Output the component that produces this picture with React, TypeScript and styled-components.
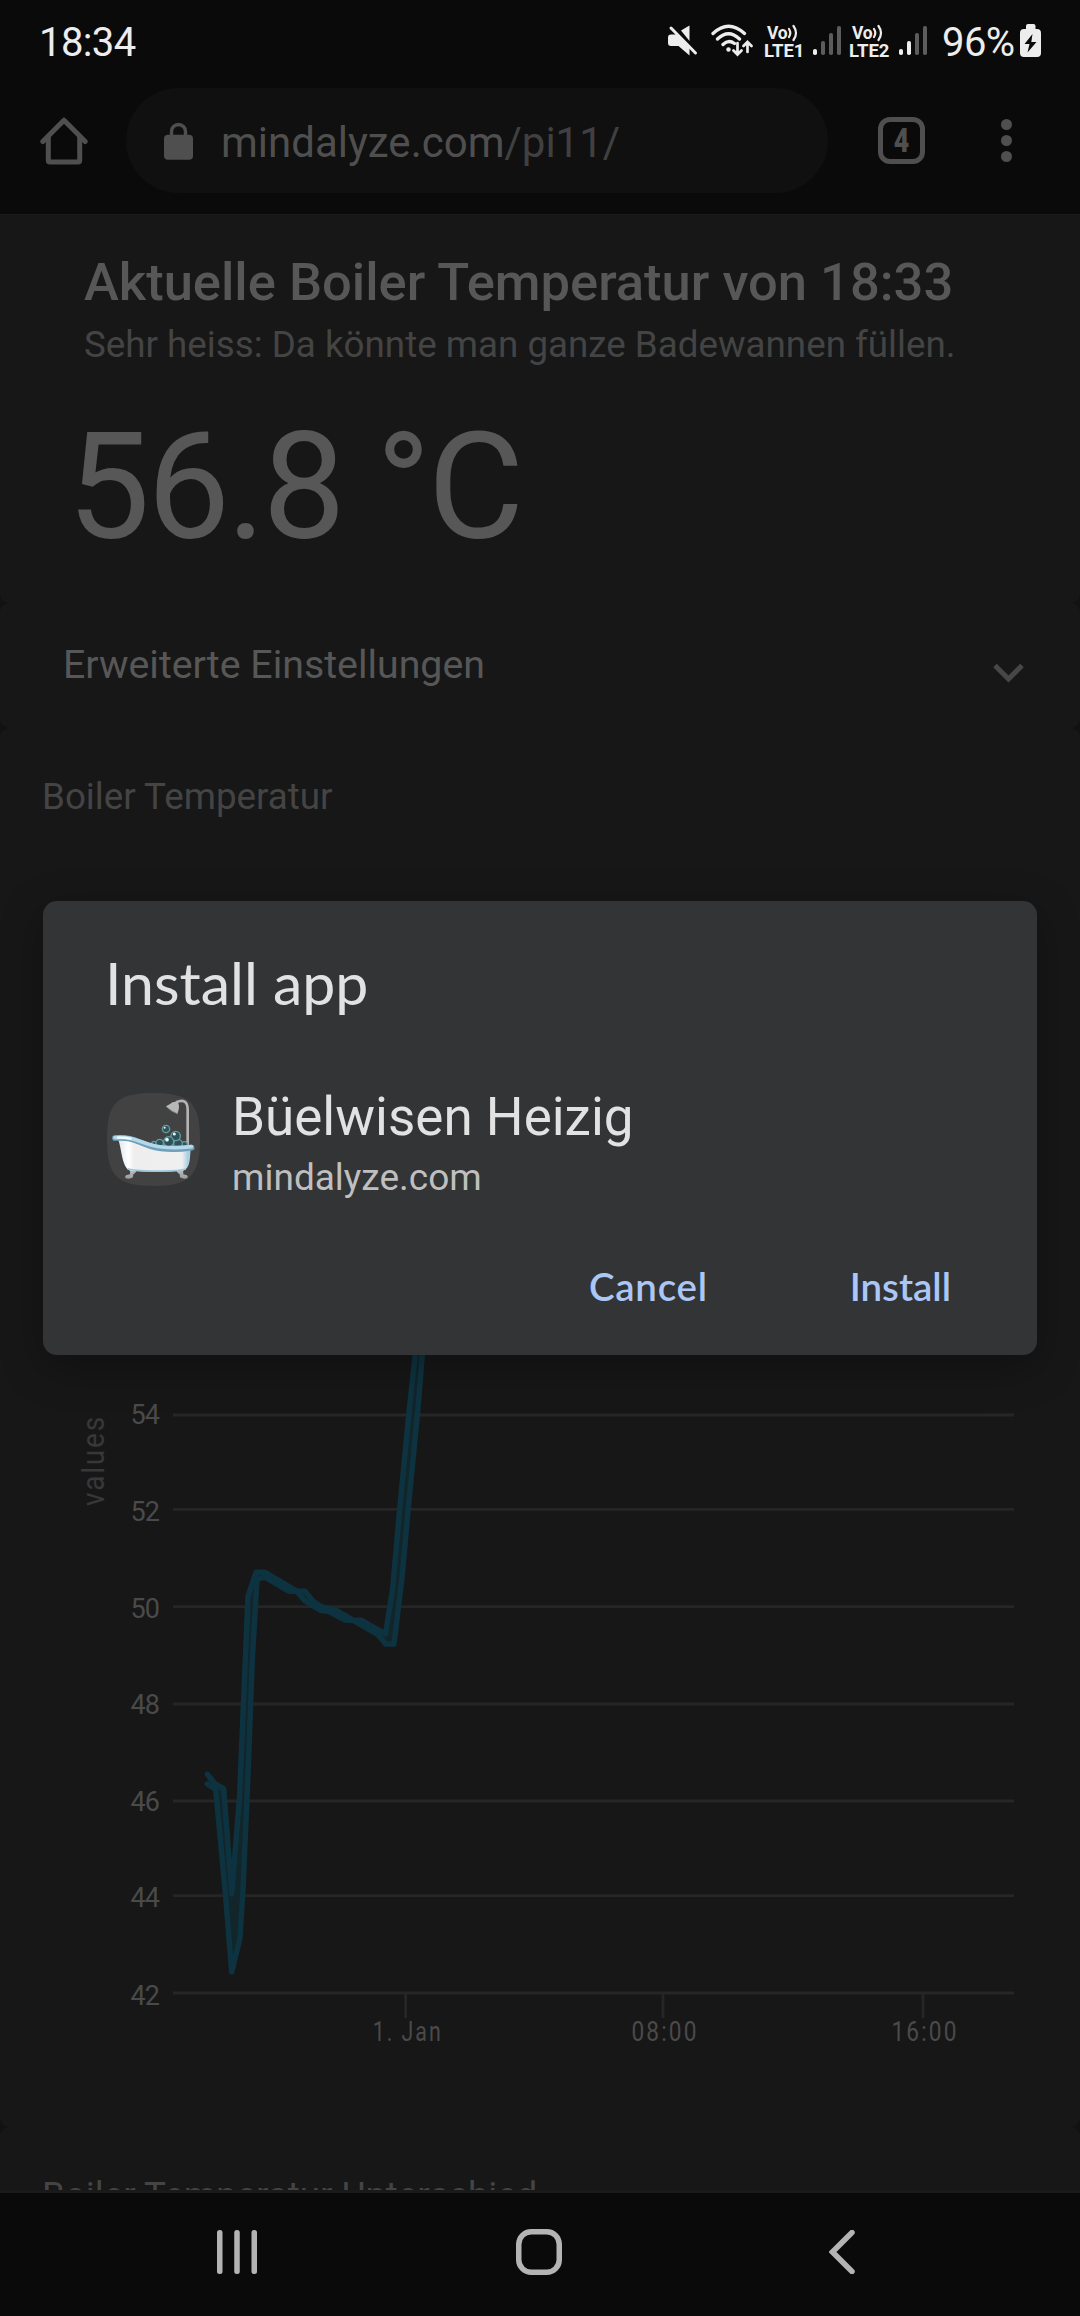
import React from 'react';
import styled, { createGlobalStyle } from 'styled-components';

const GlobalStyle = createGlobalStyle`
  * { box-sizing: border-box; }
  body { margin: 0; background: #0a0a0a; font-family: Roboto, "Noto Sans", sans-serif; }
  svg { display: block; flex: none; }
`;

const Screen = styled.div`
  position: relative;
  display: flex;
  flex-direction: column;
  width: 1080px;
  height: 2316px;
  overflow: hidden;
  background: #0a0a0a;
`;

const StatusBar = styled.header`
  display: flex;
  justify-content: space-between;
  height: 67px;
  padding: 17px 39px 0 39px;
  color: #ededed;
  font-size: 40px;
  line-height: 51px;
`;

const Clock = styled.span`
  letter-spacing: -0.6px;
`;

const StatusIcons = styled.div`
  display: flex;
  align-items: flex-start;
`;

const Slot = styled.div<{ $w: number; $gap?: number }>`
  width: ${p => p.$w}px;
  margin-left: ${p => p.$gap ?? 0}px;
  white-space: nowrap;
  letter-spacing: -0.6px;
`;

const CarrierTag = styled.div`
  display: flex;
  flex-direction: column;
  padding-top: 7px;
  font-weight: 700;
  font-size: 18.5px;
  line-height: 18px;
  letter-spacing: 0;
`;

const CarrierTop = styled.span`
  display: flex;
  padding-left: 3px;
  font-size: 17.5px;
  letter-spacing: -0.3px;
`;

const Toolbar = styled.nav`
  display: flex;
  align-items: center;
  height: 147px;
  padding-left: 39.5px;
  color: #4f4f4f;
`;

const Omnibox = styled.div`
  display: flex;
  align-items: center;
  width: 702px;
  height: 105px;
  margin-left: 38.5px;
  padding-left: 38px;
  border-radius: 53px;
  background: #101010;
  font-size: 42px;
`;

const Url = styled.span`
  margin: 4px 0 0 28px;
  line-height: 50px;
  color: #4f4f4f;
`;

const UrlPath = styled.span`
  color: #404040;
`;

const TabCount = styled.div`
  display: flex;
  align-items: center;
  justify-content: center;
  width: 47px;
  height: 47px;
  margin-left: 50px;
  border: 5px solid #4f4f4f;
  border-radius: 12px;
  font-size: 32.5px;
  font-weight: 900;
  line-height: 34px;
`;

const TabDigit = styled.span`
  transform: scaleX(0.82);
`;

const MenuDots = styled.div`
  display: flex;
  flex-direction: column;
  gap: 5px;
  margin-left: 76px;
`;

const Dot = styled.i`
  width: 11px;
  height: 11px;
  border-radius: 50%;
  background: #4f4f4f;
`;

const Page = styled.main`
  display: flex;
  flex-direction: column;
  height: 1979px;
  overflow: hidden;
  background: #121212;
  border-top: 1px solid #1a1a1a;
  border-bottom: 3px solid #1a1a1a;
`;

const Card = styled.section<{ $h: number }>`
  flex: none;
  height: ${p => p.$h}px;
  border-radius: 9px;
  background: #171717;
  overflow: hidden;
`;

const SummaryCard = styled(Card)`
  padding: 37px 0 0 84px;
  border-radius: 0 0 9px 9px;
`;

const Title = styled.h1`
  margin: 0;
  font-size: 52.5px;
  font-weight: 500;
  line-height: 60px;
  color: #575757;
  white-space: nowrap;
`;

const Subtitle = styled.p`
  margin: 11px 0 0;
  font-size: 36.75px;
  line-height: 44px;
  color: #444444;
  white-space: nowrap;
`;

const Reading = styled.div`
  margin: 45px 0 0 -17px;
  font-size: 148px;
  line-height: 152px;
  letter-spacing: -3.3px;
  color: #575757;
  white-space: nowrap;
`;

const SettingsCard = styled(Card)`
  display: flex;
  align-items: center;
  justify-content: space-between;
  padding: 0 56px 2px 63px;
  font-size: 39.3px;
  line-height: 50px;
  color: #575757;
`;

const ChartCard = styled(Card)`
  padding-top: 47px;
`;

const CardTitle = styled.h2`
  margin: 0;
  padding-left: 42px;
  font-size: 36.75px;
  font-weight: 400;
  line-height: 44px;
  color: #444444;
`;

const Dialog = styled.div`
  position: absolute;
  top: 901px;
  left: 43px;
  display: flex;
  flex-direction: column;
  width: 994px;
  height: 454px;
  padding: 47px 86px 0 64px;
  border-radius: 14px;
  background: #333436;
  box-shadow: 0 12px 44px rgba(0, 0, 0, 0.3);
`;

const DialogTitle = styled.h2`
  margin: 0 0 0 -2px;
  font-family: Lato, Roboto, sans-serif;
  font-size: 59px;
  font-weight: 400;
  line-height: 70px;
  color: #e2e2e2;
`;

const AppRow = styled.div`
  display: flex;
  margin-top: 67px;
`;

const AppIcon = styled.div`
  margin-top: 8px;
`;

const AppText = styled.div`
  display: flex;
  flex-direction: column;
  margin-left: 32px;
`;

const AppName = styled.span`
  margin-top: -1px;
  font-size: 53px;
  line-height: 66px;
  color: #e2e2e2;
`;

const AppHost = styled.span`
  font-size: 37px;
  line-height: 44px;
  margin-top: 6px;
  color: #bfbfbf;
`;

const Actions = styled.div`
  display: flex;
  justify-content: flex-end;
  gap: 142px;
  margin-top: 56px;
`;

const Action = styled.button<{ $tracking?: number }>`
  padding: 0;
  border: 0;
  background: none;
  color: #aac7f6;
  font-family: Lato, Roboto, sans-serif;
  font-size: 38.5px;
  font-weight: 600;
  line-height: 60px;
  letter-spacing: ${p => p.$tracking ?? 0}px;
`;

const NavBar = styled.footer`
  display: grid;
  grid-template-columns: repeat(3, 1fr);
  justify-items: center;
  align-items: center;
  height: 123px;
  padding: 0 87px 6px 86px;
`;

const Bars = ({ level }: { level: number }) => (
  <svg width="28" height="38" viewBox="0 0 28 38">
    {[6, 14, 22, 29].map((h, i) => (
      <rect key={h} x={i * 8} y={38 - h} width="4" height={h} rx="1.8" fill={i < level ? '#ededed' : '#5c5c5c'} />
    ))}
  </svg>
);

const Carrier = ({ n }: { n: number }) => (
  <CarrierTag>
    <CarrierTop>
      Vo
      <svg width="11" height="18" viewBox="0 0 11 18" fill="none" stroke="#ededed" strokeWidth="2.2" strokeLinecap="round">
        <path d="M2 5q2.600 4 0 8M6.500 2q5 7 0 14" />
      </svg>
    </CarrierTop>
    <span>LTE{n}</span>
  </CarrierTag>
);

const Muted = () => (
  <svg width="30" height="42" viewBox="0 0 30 42" fill="#ededed">
    <path d="M10.500 17.500H3q-3 0-3 3v5.500q0 3 3 3h7.500L21.500 38.500V29L9.500 17.500z" />
    <path d="M13 13.500L21.500 8.500V24z" />
    <path d="M3 11L27.500 36" stroke="#ededed" strokeWidth="3" strokeLinecap="round" />
  </svg>
);

const Wifi = () => (
  <svg width="42" height="42" viewBox="0 0 42 42" fill="none" stroke="#ededed" strokeWidth="3.300" strokeLinecap="round">
    <path d="M2 16.500Q17.500 2 33.500 16.500M6.500 22Q17.500 11.500 28.500 22M12 27.500Q17.500 22 23.500 26.500" />
    <circle cx="17.500" cy="32.500" r="2.200" fill="#ededed" stroke="none" />
    <path d="M26.500 26V37M22.500 33.500L26.500 37.500L30.500 33.500M36.500 35V26M32.500 29L36.500 25L40.500 29" strokeWidth="2.700" />
  </svg>
);

const Battery = () => (
  <svg width="21" height="42" viewBox="0 0 21 42">
    <path d="M6 9q0-2 2-2h5.500q2 0 2 2v3H17q4 0 4 4v20q0 4-4 4H4q-4 0-4-4V16q0-4 4-4h2z" fill="#ededed" />
    <path d="M12.500 17L4.500 27h5L7.500 35.500L16.500 25h-5.200z" fill="#0a0a0a" />
  </svg>
);

const Home = () => (
  <svg width="48" height="48" viewBox="0 0 48 48" fill="none" stroke="#4f4f4f" strokeWidth="5" strokeLinecap="round" strokeLinejoin="round">
    <path d="M2.800 24.500L24 3.200L45.200 24.500" />
    <path d="M8.300 20V43.200q0 1.800 1.800 1.800H37.900q1.800 0 1.800-1.800V20" />
  </svg>
);

const Lock = () => (
  <svg width="29" height="38" viewBox="0 0 29 38">
    <path d="M7.500 14V9.500a7 7 0 0 1 14 0V14" fill="none" stroke="#4f4f4f" strokeWidth="3.400" />
    <rect y="12.700" width="29" height="25" rx="4" fill="#4f4f4f" />
  </svg>
);

const Bathtub = () => (
  <svg width="93" height="93" viewBox="51 69 279 279">
    <defs>
      <linearGradient id="tub" x1="0" x2="1" y1="0" y2="0">
        <stop offset="0" stopColor="#dfe7ec" />
        <stop offset="0.140" stopColor="#ffffff" />
        <stop offset="0.220" stopColor="#eeeeee" />
        <stop offset="0.880" stopColor="#efefef" />
        <stop offset="0.960" stopColor="#a9cfe2" />
      </linearGradient>
      <linearGradient id="foot" x1="0" x2="0" y1="0" y2="1">
        <stop offset="0" stopColor="#c6c6c6" />
        <stop offset="1" stopColor="#9c9c9c" />
      </linearGradient>
    </defs>
    <path d="M190 69C300 69 330 99 330 208S300 348 190 348S51 318 51 208S80 69 190 69z" fill="#424242" />
    <path d="M258 97Q292 82 293 118V230" fill="none" stroke="#b4b2b2" strokeWidth="8" />
    <path d="M262 96Q248 94 240 102L228 109Q245 125 262 131Q270 113 265 100z" fill="#b9b8b8" />
    <path d="M228 109Q243 124 262 131" stroke="#7d9198" strokeWidth="3" fill="none" />
    <g fill="#315057" stroke="#5f9ea3" strokeWidth="4">
      <circle cx="192" cy="221" r="7" />
      <circle cx="209" cy="219" r="11" />
      <circle cx="283" cy="224" r="9" />
      <circle cx="264" cy="221" r="13" />
      <circle cx="257" cy="198" r="14" />
      <circle cx="236" cy="215" r="15" />
      <circle cx="228" cy="177" r="11" />
    </g>
    <g fill="#e6f7f7">
      <circle cx="253" cy="192" r="4.500" />
      <circle cx="231" cy="209" r="5.500" />
      <circle cx="224" cy="173" r="3" />
    </g>
    <path d="M117 292L141 294Q142 306 130 313L129 322Q120 329 107 325Q103 320 108 316L120 313Q122 303 117 292z" fill="url(#foot)" />
    <path d="M283 292L258 294Q257 306 269 313L270 322Q280 329 292 325Q295 320 291 316L280 313Q278 303 283 292z" fill="url(#foot)" />
    <path d="M85 209C96 240 96 300 124 302Q200 308 277 302C303 298 299 260 302 240Q230 252 160 228Q120 209 85 209z" fill="url(#tub)" />
    <path d="M113 296Q125 302 200 303Q270 304 287 297" fill="none" stroke="#9fc6dc" strokeWidth="5" />
    <path d="M75 204C130 200 140 216 180 228Q232 244 305 233" fill="none" stroke="#6fa0b9" strokeWidth="17" strokeLinecap="round" />
    <path d="M75 203C130 199 142 214 184 225Q232 238 304 230" fill="none" stroke="#b4d8e9" strokeWidth="11" strokeLinecap="round" />
    <path d="M84 203Q104 202 122 206" fill="none" stroke="#f4fbff" strokeWidth="7" strokeLinecap="round" />
  </svg>
);

// label, grid line y, label baseline y
const gridRows: [string, number, number][] = [
  ['54', 1415, 1424], ['52', 1509.3, 1521], ['50', 1606.7, 1618], ['48', 1704, 1713.5],
  ['46', 1801, 1810.5], ['44', 1895.7, 1907], ['42', 1993, 2005],
];
// label, tick x, label width
const ticks: [string, number, number][] = [['1. Jan', 405.7, 70], ['08:00', 663, 67], ['16:00', 923, 67]];

const high = '207.3,1774.3 215.7,1784.5 223.7,1788.5 231.7,1894 239.5,1797 248,1596 256,1572.3 265,1572.3 296.7,1591 305,1591.3 313.3,1601.5 322,1607 336.700,1610.500 353,1620 361.700,1620.300 385.5,1634 392.700,1588 399.500,1511 409,1412 415.700,1350';
const low = '422.700,1350 417.700,1412 408.300,1508 402,1578 394,1644 385.700,1644 378.300,1635 353.300,1620.500 345,1620 328.300,1611 320.700,1610.500 305,1601 296.700,1591.300 288.300,1591 264.500,1577 257,1579.5 252.300,1660 248,1775 243,1890 240,1938 231.700,1972 225.500,1895 215.700,1789.5 207.300,1784';

const Chart = () => (
  <svg width="1080" height="1306" viewBox="0 819 1080 1306" fontFamily="Roboto, sans-serif">
    <g stroke="#262626" strokeWidth="2.800">
      {gridRows.map(([t, y]) => <line key={t} x1="173" x2="1014" y1={y} y2={y} />)}
      {ticks.map(([t, x]) => <line key={t} x1={x} x2={x} y1="1993" y2="2018" />)}
    </g>
    <g fill="#4a4a4a" fontSize="27">
      {gridRows.map(([t, , base]) => (
        <text key={t} x="130.500" y={base} textLength="29.500" lengthAdjust="spacing">{t}</text>
      ))}
      {ticks.map(([t, x, w]) => (
        <text key={t} x={x - w / 2 + 2} y="2041" letterSpacing="2.500" textLength={w} lengthAdjust="spacingAndGlyphs">{t}</text>
      ))}
    </g>
    <text transform="translate(104 1506) rotate(-90)" fill="#383838" fontSize="31" letterSpacing="2" textLength="91" lengthAdjust="spacingAndGlyphs">values</text>
    <polygon points={`${high} ${low}`} fill="#12252b" />
    <g fill="none" stroke="#0e3340" strokeWidth="5.400" strokeLinecap="round" strokeLinejoin="round">
      <polyline points={high} />
      <polyline points={low} />
    </g>
  </svg>
);

export default function App() {
  return (
    <Screen>
      <GlobalStyle />
      <StatusBar>
        <Clock>18:34</Clock>
        <StatusIcons>
          <Slot $w={30}><Muted /></Slot>
          <Slot $w={42} $gap={13}><Wifi /></Slot>
          <Slot $w={41} $gap={11}><Carrier n={1} /></Slot>
          <Slot $w={28} $gap={8}><Bars level={1} /></Slot>
          <Slot $w={41} $gap={8}><Carrier n={2} /></Slot>
          <Slot $w={28} $gap={9}><Bars level={2} /></Slot>
          <Slot $w={72} $gap={15}>96%</Slot>
          <Slot $w={21} $gap={6}><Battery /></Slot>
        </StatusIcons>
      </StatusBar>
      <Toolbar>
        <Home />
        <Omnibox>
          <Lock />
          <Url>mindalyze.com<UrlPath>/pi11/</UrlPath></Url>
        </Omnibox>
        <TabCount><TabDigit>4</TabDigit></TabCount>
        <MenuDots><Dot /><Dot /><Dot /></MenuDots>
      </Toolbar>
      <Page>
        <SummaryCard $h={388}>
          <Title>Aktuelle Boiler Temperatur von 18:33</Title>
          <Subtitle>Sehr heiss: Da könnte man ganze Badewannen füllen.</Subtitle>
          <Reading>56.8 °C</Reading>
        </SummaryCard>
        <SettingsCard $h={125}>
          <span>Erweiterte Einstellungen</span>
          <svg width="31" height="36" viewBox="0 0 31 36" fill="none" stroke="#474747" strokeWidth="5">
            <path d="M2 18.500L15.500 32L29 18.500" />
          </svg>
        </SettingsCard>
        <ChartCard $h={1399}>
          <CardTitle>Boiler Temperatur</CardTitle>
          <Chart />
        </ChartCard>
        <ChartCard $h={400}>
          <CardTitle>Boiler Temperatur Unterschied</CardTitle>
        </ChartCard>
      </Page>
      <NavBar>
        <svg width="40" height="44" viewBox="0 0 40 44" fill="#b4b4b4">
          <rect x="0" width="5.500" height="44" rx="2.500" />
          <rect x="17.250" width="5.500" height="44" rx="2.500" />
          <rect x="34.500" width="5.500" height="44" rx="2.500" />
        </svg>
        <svg width="46" height="46" viewBox="0 0 46 46" fill="none" stroke="#b4b4b4" strokeWidth="5.500">
          <rect x="2.750" y="2.750" width="40.500" height="40.500" rx="12.500" />
        </svg>
        <svg width="26" height="44" viewBox="0 0 26 44" fill="none" stroke="#b4b4b4" strokeWidth="5.500" strokeLinecap="round">
          <path d="M23 2.500L3.500 22L23 41.500" />
        </svg>
      </NavBar>
      <Dialog>
        <DialogTitle>Install app</DialogTitle>
        <AppRow>
          <AppIcon><Bathtub /></AppIcon>
          <AppText>
            <AppName>Büelwisen Heizig</AppName>
            <AppHost>mindalyze.com</AppHost>
          </AppText>
        </AppRow>
        <Actions>
          <Action $tracking={0.7}>Cancel</Action>
          <Action>Install</Action>
        </Actions>
      </Dialog>
    </Screen>
  );
}
